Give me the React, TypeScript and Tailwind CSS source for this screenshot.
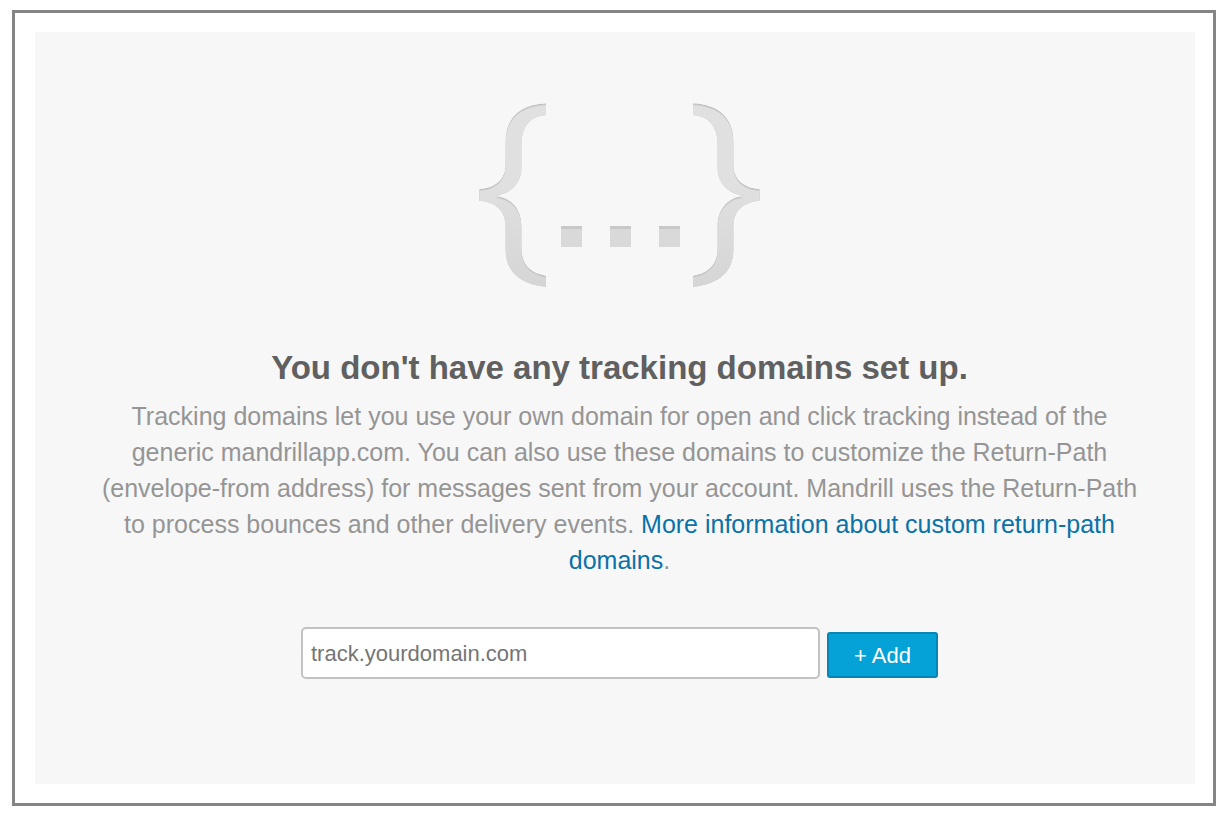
const BRACE =
  'M68 1.3C42 2.5 28 16 27.5 38V62C27.5 78 17 86 1.3 87V98.7C17 100 27.5 108 27.5 124V148C28 170 42 182 68 184.7V173.7C53 171 43.5 163 43.5 146V124C43.5 107 33 95.5 18 94C33 91 43.5 81 43.5 66V40C44.5 23 53 14 68 13Z'

const DOTS = [83, 132, 181]

function BracesGraphic() {
  return (
    <svg viewBox="0 0 283 186" className="h-[186px] w-[283px]" aria-hidden="true">
      <defs>
        <linearGradient id="fade" gradientUnits="userSpaceOnUse" x1="0" y1="80" x2="0" y2="186">
          <stop offset="0" stopColor="#e0e0e0" />
          <stop offset="1" stopColor="#d5d5d5" />
        </linearGradient>
        <clipPath id="brace-clip">
          <path d={BRACE} />
        </clipPath>
        {/* Dark top edge shows above the lighter face */}
        <g id="brace" clipPath="url(#brace-clip)">
          <path d={BRACE} fill="#bebebe" />
          <path d={BRACE} fill="#cccccc" transform="translate(0 1)" />
          <path d={BRACE} fill="url(#fade)" transform="translate(0 2)" />
        </g>
      </defs>
      <use href="#brace" />
      <use href="#brace" transform="translate(283 0) scale(-1 1)" />
      {DOTS.map((x) => (
        <g key={x}>
          <rect x={x} y="124" width="21" height="21" fill="#d9d9d9" />
          <rect x={x} y="124" width="21" height="3" fill="#c8c8c8" />
        </g>
      ))}
    </svg>
  )
}

export default function App() {
  return (
    <div className="min-h-screen bg-white pt-[10px] pr-3 pb-[14px] pl-3 font-['Helvetica_Neue','Liberation_Sans',Arial,sans-serif]">
      <main className="border-[3px] border-[#858585] pt-[19px] pr-[18px] pb-[19px] pl-5">
        <section className="flex flex-col items-center bg-[#f7f7f7] pt-[70px] pr-[55px] pb-[105px] pl-16 text-center">
          <BracesGraphic />

          <h1 className="mt-[58px] text-[33px] leading-[44px] font-bold text-[#606060]">
            You don't have any tracking domains set up.
          </h1>
          <p className="mt-2 text-[25px] leading-[36px] text-[#959595]">
            Tracking domains let you use your own domain for open and click tracking instead of the
            generic mandrillapp.com. You can also use these domains to customize the Return-Path
            (envelope-from address) for messages sent from your account. Mandrill uses the
            Return-Path to process bounces and other delivery events.{' '}
            <a href="#return-path" className="text-[#0a72a8]">
              More information about custom return-path domains
            </a>
            .
          </p>

          <form className="mt-[49px] flex items-center gap-[7px]" onSubmit={(e) => e.preventDefault()}>
            <input
              type="text"
              aria-label="Tracking domain"
              placeholder="track.yourdomain.com"
              className="h-[52px] w-[519px] rounded-[5px] border-2 border-[#c2c2c2] bg-white px-2 pt-[2px] text-[22px] text-[#606060] placeholder:text-[#757575]"
            />
            <button
              type="submit"
              className="mt-1 h-[46px] w-[111px] rounded-[3px] border-2 border-[#0884b5] bg-[#05a2d8] text-[22px] text-white"
            >
              + Add
            </button>
          </form>
        </section>
      </main>
    </div>
  )
}
